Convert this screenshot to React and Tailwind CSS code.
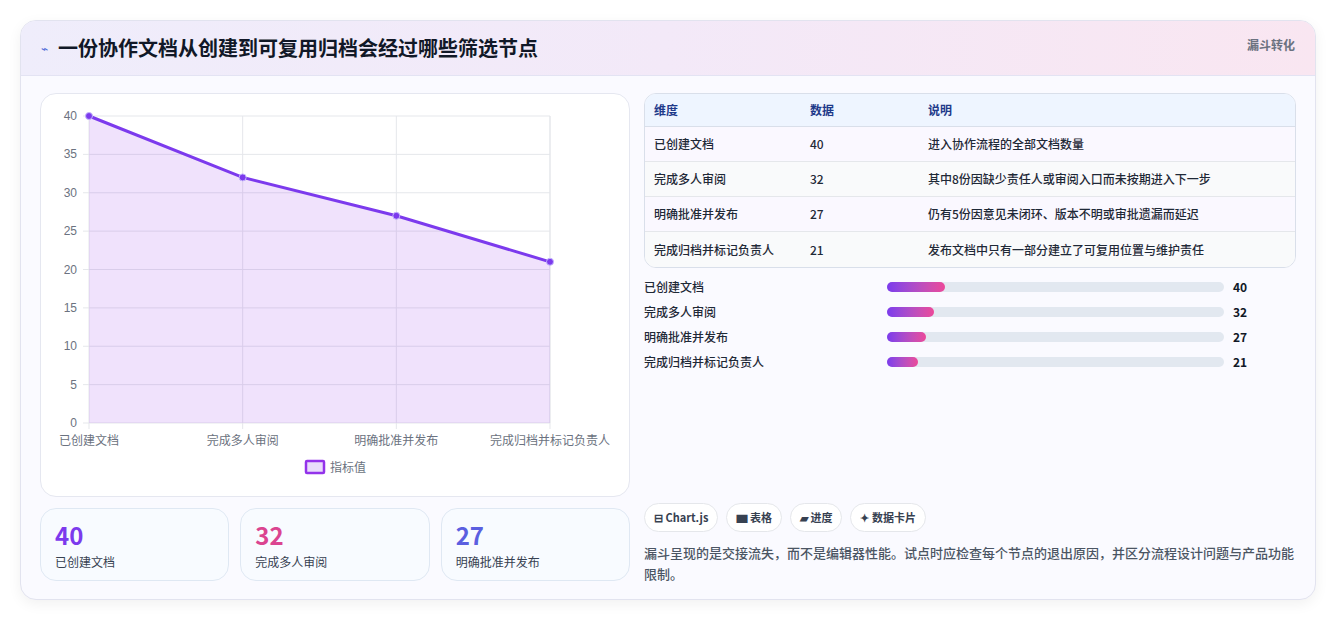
const F = { fontFamily: '"Noto Sans CJK SC", "Noto Sans", sans-serif' };
const rows = [
  ["已创建文档", 40, "进入协作流程的全部文档数量"],
  ["完成多人审阅", 32, "其中8份因缺少责任人或审阅入口而未按期进入下一步"],
  ["明确批准并发布", 27, "仍有5份因意见未闭环、版本不明或审批遗漏而延迟"],
  ["完成归档并标记负责人", 21, "发布文档中只有一部分建立了可复用位置与维护责任"],
];
function Chart() {
  const x0 = 48, x1 = 509, y0 = 22, y1 = 329;
  const xs = [0, 1, 2, 3].map(i => x0 + (i * (x1 - x0)) / 3);
  const y = v => y1 - (v / 40) * (y1 - y0);
  const pts = rows.map((r, i) => [xs[i], y(r[1])]);
  const line = pts.map(p => p.join(",")).join(" ");
  return (
    <svg width="588" height="402" style={{ fontFamily: '"Liberation Sans", sans-serif' }}>
      {[0, 5, 10, 15, 20, 25, 30, 35, 40].map(v => (
        <g key={v}>
          <line x1={x0 - 6} x2={x1} y1={y(v)} y2={y(v)} stroke="#e5e7eb" />
          <text x={x0 - 12} y={y(v) + 4} textAnchor="end" fontSize="12" fill="#6b7280">{v}</text>
        </g>
      ))}
      {xs.map((x, i) => <line key={i} x1={x} x2={x} y1={y0} y2={y1 + 6} stroke="#e5e7eb" />)}
      <line x1={x1} x2={x1} y1={y0} y2={y1} stroke="#e5e7eb" />
      <polygon points={`${x0},${y1} ${line} ${x1},${y1}`} fill="rgba(147,51,234,0.14)" />
      <polyline points={line} fill="none" stroke="#7c3aed" strokeWidth="3" />
      {pts.map((p, i) => <circle key={i} cx={p[0]} cy={p[1]} r="3.5" fill="#7c3aed" stroke="#c4b5fd" strokeWidth="1" />)}
      {rows.map((r, i) => (
        <text key={i} x={xs[i]} y={351} textAnchor="middle" fontSize="12" fill="#6b7280" style={F}>{r[0]}</text>
      ))}
      <rect x="265" y="367" width="18" height="12" fill="#e9dcfb" stroke="#9333ea" strokeWidth="2.5" rx="1" />
      <text x="289" y="378" fontSize="12" fill="#6b7280" style={F}>指标值</text>
    </svg>
  );
}
export default function App() {
  return (
    <div className="w-[1336px] h-[621px] bg-white p-5" style={F}>
      <div className="h-[580px] rounded-2xl border border-[#e2e3ef] bg-[#fafaff] shadow-[0_4px_14px_rgba(0,0,0,0.06)] overflow-hidden">
        <div className="h-[55px] flex items-center justify-between px-5 border-b border-[#e3e3f3] bg-gradient-to-r from-[#efedfb] via-[#f3e9f8] to-[#f9e6f1]">
          <div className="flex items-center gap-2.5">
            <span className="text-[#4f6bd8] text-[12px]">⌁</span>
            <span className="text-[20px] font-bold text-[#111827]">一份协作文档从创建到可复用归档会经过哪些筛选节点</span>
          </div>
          <span className="text-[12px] font-bold text-[#6b7280] self-start mt-[15px]">漏斗转化</span>
        </div>
        <div className="flex gap-4 px-[19px] pt-[17px]">
          <div className="w-[590px] flex flex-col gap-[11px]">
            <div className="h-[404px] rounded-2xl border border-[#e5e7f0] bg-white"><Chart /></div>
            <div className="grid grid-cols-3 gap-[11px]">
              {[[40, "text-[#7c3aed]"], [32, "text-[#db4490]"], [27, "text-[#5b5fe0]"]].map(([v, c], i) => (
                <div key={i} className="h-[73px] rounded-2xl border border-[#dfe8f3] bg-[#f8fbff] px-[14px] pt-[11px]">
                  <div className={`text-[24px] font-bold leading-[30px] ${c}`}>{v}</div>
                  <div className="text-[12px] text-[#374151] mt-[3px]">{rows[i][0]}</div>
                </div>
              ))}
            </div>
          </div>
          <div className="w-[652px] flex flex-col -ml-[2px]">
            <div className="rounded-xl border border-[#d9dfea] overflow-hidden bg-white text-[12px]">
              <div className="flex h-[33px] items-center bg-[#eef5ff] border-b border-[#d9dfea] font-bold text-[#1e3a8a]">
                <div className="w-[165px] pl-[9px]">维度</div><div className="w-[118px]">数据</div><div>说明</div>
              </div>
              {rows.map((r, i) => (
                <div key={i} className={`flex h-[35px] items-center text-[#1f2937] font-medium ${i % 2 ? "bg-[#f9fafb]" : "bg-[#faf8ff]"} ${i < 3 ? "border-b border-[#e5e7eb]" : ""}`}>
                  <div className="w-[165px] pl-[9px]">{r[0]}</div><div className="w-[118px]">{r[1]}</div><div>{r[2]}</div>
                </div>
              ))}
            </div>
            <div className="flex flex-col gap-[13px] mt-[13px]">
              {rows.map((r, i) => (
                <div key={i} className="flex items-center h-[12px] text-[12px]">
                  <div className="w-[243px] text-[#1f2937] font-medium">{r[0]}</div>
                  <div className="w-[337px] h-[10px] rounded-full bg-[#e2e8f0]">
                    <div className="h-full rounded-full bg-gradient-to-r from-[#7c3aed] to-[#ec4899]" style={{ width: `${(r[1] / 231) * 100}%` }} />
                  </div>
                  <div className="ml-[9px] font-bold text-[#111827]">{r[1]}</div>
                </div>
              ))}
            </div>
            <div className="mt-[135px] flex gap-[8px]">
              {["⊟ Chart.js", "▆ 表格", "▰ 进度", "✦ 数据卡片"].map(t => (
                <span key={t} className="h-[29px] px-[9px] flex items-center rounded-full border border-[#e5e7eb] bg-white text-[11px] font-bold text-[#374151]">{t}</span>
              ))}
            </div>
            <p className="mt-[10px] text-[13px] leading-[21px] text-[#4b5563] font-medium">漏斗呈现的是交接流失，而不是编辑器性能。试点时应检查每个节点的退出原因，并区分流程设计问题与产品功能限制。</p>
          </div>
        </div>
      </div>
    </div>
  );
}
